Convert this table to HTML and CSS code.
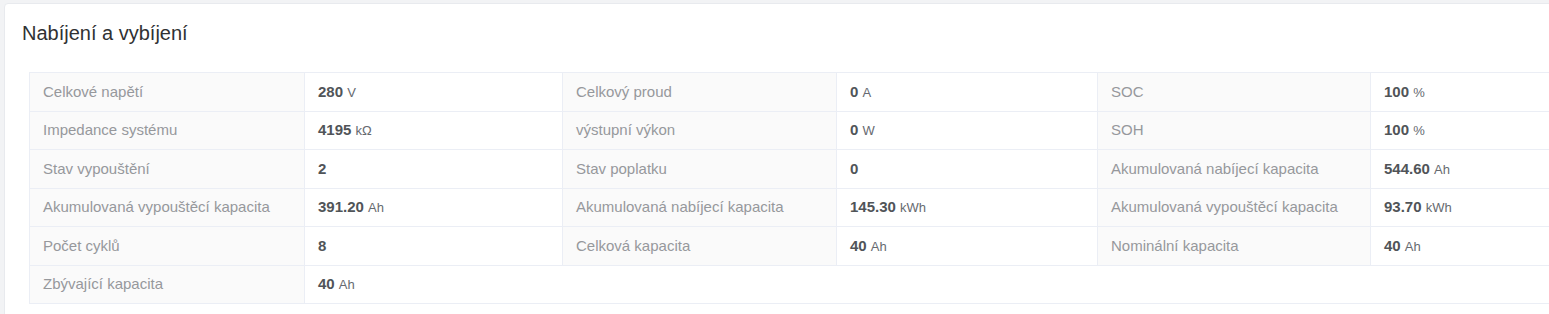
FILE: index.html
```html
<!DOCTYPE html>
<html lang="cs">
<head>
<meta charset="utf-8">
<title>Nabíjení a vybíjení</title>
<link rel="stylesheet" href="styles.css">
</head>
<body>
<div class="card">
  <div class="card-header">
    <h2 class="card-title">Nabíjení a vybíjení</h2>
  </div>
  <div class="card-body">
    <table class="desc">
      <colgroup>
        <col class="c-label1"><col class="c-value1">
        <col class="c-label2"><col class="c-value2">
        <col class="c-label3"><col class="c-value3">
      </colgroup>
      <tbody>
        <tr>
          <th class="label">Celkové napětí</th><td class="value"><b>280</b> <span class="unit">V</span></td>
          <th class="label">Celkový proud</th><td class="value"><b>0</b> <span class="unit">A</span></td>
          <th class="label">SOC</th><td class="value"><b>100</b> <span class="unit">%</span></td>
        </tr>
        <tr>
          <th class="label">Impedance systému</th><td class="value"><b>4195</b> <span class="unit">kΩ</span></td>
          <th class="label">výstupní výkon</th><td class="value"><b>0</b> <span class="unit">W</span></td>
          <th class="label">SOH</th><td class="value"><b>100</b> <span class="unit">%</span></td>
        </tr>
        <tr>
          <th class="label">Stav vypouštění</th><td class="value"><b>2</b></td>
          <th class="label">Stav poplatku</th><td class="value"><b>0</b></td>
          <th class="label">Akumulovaná nabíjecí kapacita</th><td class="value"><b>544.60</b> <span class="unit">Ah</span></td>
        </tr>
        <tr>
          <th class="label">Akumulovaná vypouštěcí kapacita</th><td class="value"><b>391.20</b> <span class="unit">Ah</span></td>
          <th class="label">Akumulovaná nabíjecí kapacita</th><td class="value"><b>145.30</b> <span class="unit">kWh</span></td>
          <th class="label">Akumulovaná vypouštěcí kapacita</th><td class="value"><b>93.70</b> <span class="unit">kWh</span></td>
        </tr>
        <tr>
          <th class="label">Počet cyklů</th><td class="value"><b>8</b></td>
          <th class="label">Celková kapacita</th><td class="value"><b>40</b> <span class="unit">Ah</span></td>
          <th class="label">Nominální kapacita</th><td class="value"><b>40</b> <span class="unit">Ah</span></td>
        </tr>
        <tr>
          <th class="label">Zbývající kapacita</th><td class="value" colspan="5"><b>40</b> <span class="unit">Ah</span></td>
        </tr>
      </tbody>
    </table>
  </div>
</div>
</body>
</html>
```
FILE: styles.css
```css
html, body {
  overflow: hidden;
}
body {
  margin: 0;
  padding: 3px 0 0 4px;
  background: #f2f3f5;
  font-family: "Liberation Sans", Arial, sans-serif;
}
.card {
  width: 1660px;
  background: #ffffff;
  border: 1px solid #e8eaee;
  border-radius: 4px;
}
.card-header {
  padding: 14px 17px 0;
}
.card-title {
  margin: 0;
  font-size: 20px;
  line-height: 30px;
  font-weight: normal;
  color: #303133;
}
.card-body {
  padding: 24px 24px 24px 24px;
}
.desc {
  border-collapse: collapse;
  table-layout: fixed;
  width: 1601px;
}
.c-label1 { width: 275px; }
.c-value1 { width: 258px; }
.c-label2 { width: 274px; }
.c-value2 { width: 261px; }
.c-label3 { width: 273px; }
.c-value3 { width: 260px; }
.desc th, .desc td {
  border: 1px solid #ebeef5;
  padding: 7.5px 13px;
  line-height: 22.5px;
  font-size: 15px;
  text-align: left;
  white-space: nowrap;
}
.label {
  background: #fafafa;
  color: #96989c;
  font-weight: normal;
}
.value {
  background: #ffffff;
  color: #606266;
}
.value b {
  font-weight: bold;
  color: #505458;
  line-height: 1;
}
.unit {
  font-size: 13px;
  line-height: 1;
  color: #666a70;
}
```
